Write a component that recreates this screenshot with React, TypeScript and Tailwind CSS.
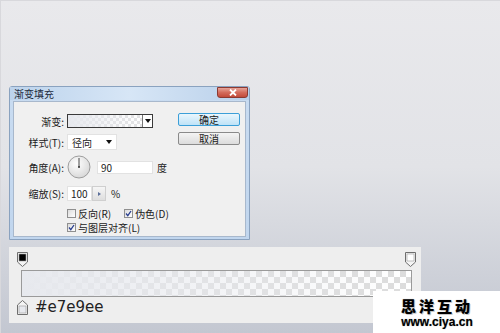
import React from "react";

const cn = '"Noto Sans CJK SC", "Noto Sans", sans-serif';

function Dial() {
  return (
    <svg width="24" height="24" viewBox="0 0 24 24">
      <defs>
        <radialGradient id="dg" cx="40%" cy="35%" r="70%">
          <stop offset="0%" stopColor="#ffffff" />
          <stop offset="100%" stopColor="#d6d6d6" />
        </radialGradient>
      </defs>
      <circle cx="12" cy="12" r="11" fill="url(#dg)" stroke="#8a8a8a" strokeWidth="0.8" />
      <line x1="12" y1="12" x2="12" y2="3" stroke="#333" strokeWidth="0.9" />
      <circle cx="12" cy="12" r="1" fill="#333" />
    </svg>
  );
}

function Check({ on }: { on: boolean }) {
  return (
    <span className="w-[9px] h-[9px] border border-[#8f8f8f] bg-gradient-to-br from-[#dcdcdc] to-[#ffffff] flex items-center justify-center">
      {on && (
        <svg width="7" height="7" viewBox="0 0 7 7">
          <path d="M1 3.5 L2.8 5.6 L6 1" fill="none" stroke="#2a3f8f" strokeWidth="1.3" />
        </svg>
      )}
    </span>
  );
}

function Stop({ fill, up }: { fill: string; up?: boolean }) {
  return (
    <svg width="11" height="15" viewBox="0 0 11 15">
      {up ? (
        <>
          <path d="M0.5 14.5 V5 L5.5 0.5 L10.5 5 V14.5 Z" fill="#f4f4f4" stroke="#6e6e6e" />
          <rect x="2" y="6" width="7" height="7" fill={fill} stroke="#9a9a9a" strokeWidth="0.6" />
        </>
      ) : (
        <>
          <path d="M0.5 0.5 H10.5 V10 L5.5 14.5 L0.5 10 Z" fill="#f4f4f4" stroke="#6e6e6e" />
          <rect x="2" y="2" width="7" height="7" fill={fill} stroke="#9a9a9a" strokeWidth="0.6" />
        </>
      )}
    </svg>
  );
}

export default function App() {
  return (
    <div className="relative w-[500px] h-[333px] overflow-hidden bg-gradient-to-b from-[#e9e9ec] via-[#e2e3e7] to-[#c3c7d1] border-t border-l border-[#d8d8dc]">
      {/* dialog */}
      <div className="ml-[8px] mt-[85px] w-[241px] h-[154px] flex flex-col bg-gradient-to-b from-[#c9dcf1] to-[#c1d6ee] border border-[#8aa2bf] rounded-t-[3px]" style={{ fontFamily: cn }}>
        <div className="h-[13px] flex items-start justify-between bg-gradient-to-r from-[#bcd3ec] via-[#d7e6f6] to-[#b9d0ea]">
          <span className="pl-[4px] pt-[1px] text-[10px] leading-[12px] text-[#1e2b3c]">渐变填充</span>
          <span className="w-[31px] h-[11px] mr-[1px] rounded-b-[3px] border border-[#8b3a32] bg-gradient-to-b from-[#e6a398] via-[#d36b5c] to-[#c24a3a] flex items-center justify-center">
            <svg width="8" height="7" viewBox="0 0 8 7">
              <path d="M1 0.5 L7 6.5 M7 0.5 L1 6.5" stroke="#ffffff" strokeWidth="1.8" />
            </svg>
          </span>
        </div>
        <div className="mx-[3px] mt-[1px] h-[136px] bg-[#f0f0f0] border border-[#a8b8cc] flex text-[10px] text-[#1b1b1b]">
          {/* form column */}
          <div className="w-[162px] flex flex-col">
            <div className="mt-[12px] h-[14px] flex items-center">
              <span className="w-[50px] text-right">渐变:</span>
              <span className="ml-[3px] w-[86px] h-[14px] border border-[#3a3a3a] flex">
                <span className="flex-1 bg-[conic-gradient(#e2e2e4_25%,#ffffff_0_50%,#e2e2e4_0_75%,#ffffff_0)] bg-[length:6px_6px]">
                  <span className="block w-full h-full bg-gradient-to-r from-[#e7e9ee] to-transparent" />
                </span>
                <span className="w-[10px] border-l border-[#777] bg-white flex items-center justify-center">
                  <svg width="6" height="4" viewBox="0 0 6 4"><path d="M0 0 H6 L3 4 Z" fill="#111" /></svg>
                </span>
              </span>
            </div>
            <div className="mt-[6px] h-[16px] flex items-center">
              <span className="w-[50px] text-right">样式(T):</span>
              <span className="ml-[3px] w-[50px] h-[16px] bg-white border border-[#e2e2e2] flex items-center justify-between px-[4px]">
                <span>径向</span>
                <svg width="6" height="4" viewBox="0 0 6 4"><path d="M0 0 H6 L3 4 Z" fill="#111" /></svg>
              </span>
            </div>
            <div className="mt-[5px] h-[24px] flex items-center">
              <span className="w-[50px] text-right">角度(A):</span>
              <span className="ml-[3px]"><Dial /></span>
              <span className="ml-[6px] w-[56px] h-[13px] bg-white border border-[#e2e2e2] flex items-center pl-[3px]">90</span>
              <span className="ml-[4px]">度</span>
            </div>
            <div className="mt-[7px] h-[15px] flex items-center">
              <span className="w-[50px] text-right">缩放(S):</span>
              <span className="ml-[3px] w-[25px] h-[15px] bg-white border border-[#e2e2e2] flex items-center pl-[3px]">100</span>
              <span className="w-[14px] h-[15px] bg-gradient-to-b from-[#f6f6f6] to-[#dedede] border border-[#cfcfcf] flex items-center justify-center">
                <svg width="3" height="4" viewBox="0 0 3 4"><path d="M0 0 L3 2 L0 4 Z" fill="#5b6f9a" /></svg>
              </span>
              <span className="ml-[5px]">%</span>
            </div>
            <div className="mt-[6px] h-[12px] flex items-center pl-[53px]">
              <Check on={false} />
              <span className="ml-[2px]">反向(R)</span>
              <span className="ml-[13px]"><Check on={true} /></span>
              <span className="ml-[2px]">伪色(D)</span>
            </div>
            <div className="mt-[2px] h-[12px] flex items-center pl-[53px]">
              <Check on={true} />
              <span className="ml-[2px]">与图层对齐(L)</span>
            </div>
          </div>
          {/* buttons */}
          <div className="flex flex-col pt-[11px] pl-[2px]">
            <span className="w-[62px] h-[13px] rounded-[2px] border border-[#3c9fd8] bg-gradient-to-b from-[#eaf6fd] to-[#bfe3f7] flex items-center justify-center text-[10px] leading-none">确定</span>
            <span className="mt-[6px] w-[62px] h-[13px] rounded-[2px] border border-[#8a8a8a] bg-gradient-to-b from-[#f4f4f4] to-[#dcdcdc] flex items-center justify-center text-[10px] leading-none">取消</span>
          </div>
        </div>
      </div>

      {/* gradient editor */}
      <div className="ml-[8px] mt-[7px] w-[412px] h-[76px] bg-[#eeeeee] flex flex-col">
        <div className="mt-[5px] h-[15px] flex justify-between pl-[8px] pr-[5px]">
          <Stop fill="#000000" />
          <Stop fill="#ffffff" />
        </div>
        <div className="ml-[12px] mt-[3px] w-[391px] h-[27px] border border-[#9a9a9a] bg-[conic-gradient(#dcdcdc_25%,#ffffff_0_50%,#dcdcdc_0_75%,#ffffff_0)] bg-[length:12px_12px]">
          <div className="w-full h-full bg-gradient-to-r from-[#e7e9ee] via-[#e7e9ee]/50 to-transparent" />
        </div>
        <div className="mt-[2px] h-[16px] flex items-center pl-[8px]">
          <Stop fill="#e7e9ee" up />
          <span className="ml-[7px] text-[15px] leading-none text-[#222]" style={{ fontFamily: '"DejaVu Sans", sans-serif' }}>#e7e9ee</span>
        </div>
      </div>

      {/* watermark */}
      <div className="absolute left-[372px] top-[290px] w-[128px] h-[43px] bg-white flex flex-col items-center pt-[7px] gap-[3px]" style={{ fontFamily: cn }}>
        <span className="text-[15px] leading-[15px] font-black tracking-[3px] text-black [text-shadow:0_0_1px_#999,1px_1px_0_#ccc]">思洋互动</span>
        <span className="text-[12px] leading-[12px] font-bold text-black [text-shadow:0_0_1px_#888]" style={{ fontFamily: '"Liberation Sans", sans-serif' }}>www.ciya.cn</span>
      </div>
    </div>
  );
}
